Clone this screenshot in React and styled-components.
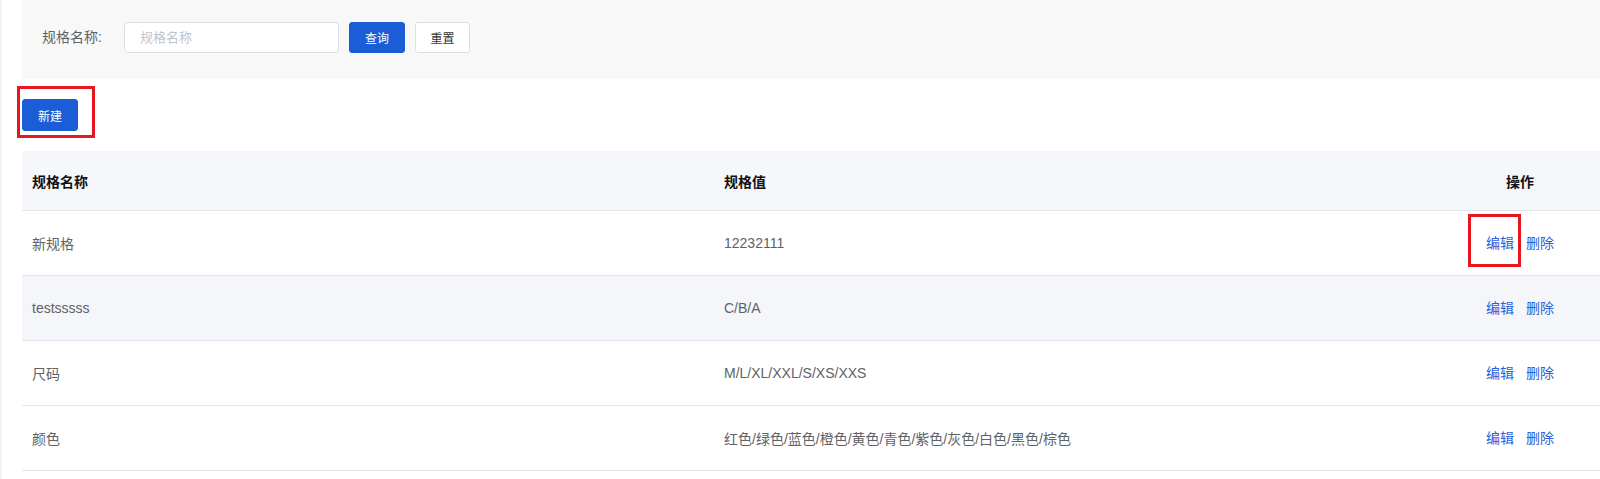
import React from "react";
import styled, { createGlobalStyle } from "styled-components";

const GlobalStyle = createGlobalStyle`
  html, body {
    margin: 0;
    padding: 0;
    background: #fff;
  }
  body {
    font-family: "Liberation Sans", Arial, "Noto Sans CJK SC", sans-serif;
    font-size: 14px;
    color: #606266;
  }
`;

const Page = styled.div`
  display: flex;
  min-height: 479px;
`;

const SideEdge = styled.div`
  width: 2px;
  flex-shrink: 0;
  background: #f2f2f2;
`;

const Content = styled.div`
  flex: 1;
  padding-left: 20px;
  min-width: 0;
`;

const SearchPanel = styled.div`
  height: 79px;
  box-sizing: border-box;
  padding: 22px 20px 0;
  background: #f8f8f8;
  display: flex;
  align-items: flex-start;
`;

const Label = styled.span`
  height: 31px;
  line-height: 31px;
  width: 82px;
  font-size: 14px;
  color: #606266;
`;

const Input = styled.input`
  width: 215px;
  height: 31px;
  box-sizing: border-box;
  border: 1px solid #dcdfe6;
  border-radius: 4px;
  padding: 0 15px;
  font-family: inherit;
  font-size: 13px;
  color: #606266;
  background: #fff;
  outline: none;
  &::placeholder {
    color: #c0c4cc;
  }
`;

const Button = styled.button`
  height: ${(p) => p.$h || 31}px;
  width: ${(p) => p.$w || 56}px;
  margin-left: ${(p) => p.$ml || 0}px;
  box-sizing: border-box;
  border-radius: 3px;
  border: 1px solid ${(p) => (p.$primary ? "#1a5dd6" : "#dcdfe6")};
  background: ${(p) => (p.$primary ? "#1a5dd6" : "#fff")};
  color: ${(p) => (p.$primary ? "#fff" : "#333")};
  font-family: inherit;
  font-size: 12px;
  padding: 0;
  cursor: pointer;
`;

const ActionBar = styled.div`
  padding: 20px 0;
  display: flex;
`;

const Marked = styled.span`
  position: relative;
  display: inline-flex;
`;

const Highlight = styled.span`
  position: absolute;
  top: ${(p) => p.$top}px;
  left: ${(p) => p.$left}px;
  width: ${(p) => p.$w}px;
  height: ${(p) => p.$h}px;
  box-sizing: border-box;
  border: 3px solid #e8161f;
  pointer-events: none;
`;

const Table = styled.table`
  width: 100%;
  border-collapse: collapse;
  table-layout: fixed;
`;

const HeadCell = styled.th`
  height: 59px;
  padding: 0 10px;
  background: #f5f7fa;
  border-bottom: 1px solid #e2e6ec;
  text-align: ${(p) => (p.$center ? "center" : "left")};
  font-weight: 700;
  font-size: 14px;
  color: #111;
`;

const Row = styled.tr`
  background: ${(p) => (p.$hover ? "#f5f6f9" : "#fff")};
`;

const Cell = styled.td`
  height: 64px;
  padding: 0 10px;
  border-bottom: 1px solid #e2e6ec;
  text-align: ${(p) => (p.$center ? "center" : "left")};
  font-size: 14px;
  color: #606266;
  white-space: nowrap;
`;

const Links = styled.div`
  display: inline-flex;
  gap: 12px;
`;

const LinkButton = styled.a`
  color: #2a60d8;
  font-size: 14px;
  cursor: pointer;
  line-height: 20px;
`;

const rows = [
  { name: "新规格", value: "12232111", marked: true },
  { name: "testsssss", value: "C/B/A", hover: true },
  { name: "尺码", value: "M/L/XL/XXL/S/XS/XXS" },
  {
    name: "颜色",
    value: "红色/绿色/蓝色/橙色/黄色/青色/紫色/灰色/白色/黑色/棕色",
  },
];

export default function App() {
  return (
    <>
      <GlobalStyle />
      <Page>
        <SideEdge />
        <Content>
          <SearchPanel>
            <Label>规格名称:</Label>
            <Input placeholder="规格名称" />
            <Button $primary $ml={10}>
              查询
            </Button>
            <Button $ml={10} $w={55}>
              重置
            </Button>
          </SearchPanel>

          <ActionBar>
            <Marked>
              <Button $primary $h={32}>
                新建
              </Button>
              <Highlight $top={-13} $left={-5} $w={78} $h={52} />
            </Marked>
          </ActionBar>

          <Table>
            <colgroup>
              <col style={{ width: 692 }} />
              <col />
              <col style={{ width: 160 }} />
            </colgroup>
            <thead>
              <tr>
                <HeadCell>规格名称</HeadCell>
                <HeadCell>规格值</HeadCell>
                <HeadCell $center>操作</HeadCell>
              </tr>
            </thead>
            <tbody>
              {rows.map((row) => (
                <Row key={row.name} $hover={row.hover}>
                  <Cell>{row.name}</Cell>
                  <Cell>{row.value}</Cell>
                  <Cell $center>
                    <Links>
                      <Marked>
                        <LinkButton>编辑</LinkButton>
                        {row.marked && (
                          <Highlight $top={-19} $left={-18} $w={53} $h={53} />
                        )}
                      </Marked>
                      <LinkButton>删除</LinkButton>
                    </Links>
                  </Cell>
                </Row>
              ))}
            </tbody>
          </Table>
        </Content>
      </Page>
    </>
  );
}
